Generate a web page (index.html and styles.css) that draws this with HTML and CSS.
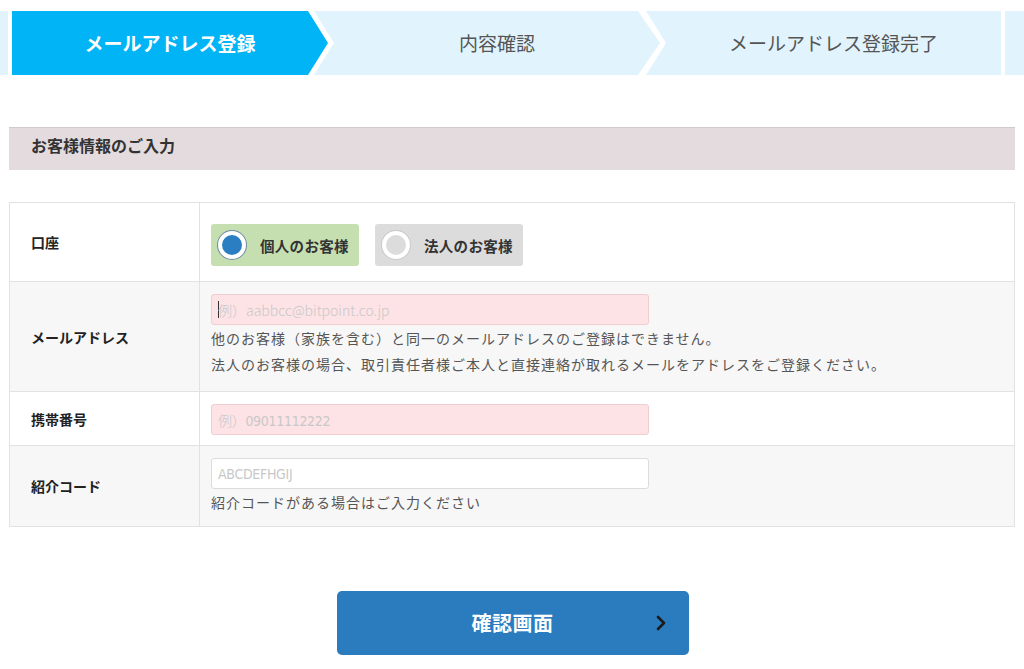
FILE: index.html
```html
<!DOCTYPE html>
<html lang="ja">
<head>
<meta charset="utf-8">
<title>メールアドレス登録</title>
<link rel="stylesheet" href="styles.css">
</head>
<body>
<div class="steps">
  <div class="step-edge"></div>
  <div class="step step-first active"><span>メールアドレス登録</span></div>
  <div class="step step-mid"><span>内容確認</span></div>
  <div class="step step-last"><span>メールアドレス登録完了</span></div>
  <div class="step-tail"></div>
</div>

<div class="content">
  <h2 class="section-title">お客様情報のご入力</h2>

  <div class="form-table">
    <div class="row">
      <div class="label">口座</div>
      <div class="value value-radio">
        <label class="radio-box selected"><span class="radio-dot"></span><span class="radio-text">個人のお客様</span></label>
        <label class="radio-box"><span class="radio-dot"></span><span class="radio-text">法人のお客様</span></label>
      </div>
    </div>
    <div class="row alt">
      <div class="label">メールアドレス</div>
      <div class="value value-mail">
        <div class="input pink"><span class="caret"></span><span class="ph">例）aabbcc@bitpoint.co.jp</span></div>
        <p class="note">他のお客様（家族を含む）と同一のメールアドレスのご登録はできません。</p>
        <p class="note">法人のお客様の場合、取引責任者様ご本人と直接連絡が取れるメールをアドレスをご登録ください。</p>
      </div>
    </div>
    <div class="row">
      <div class="label">携帯番号</div>
      <div class="value value-tight">
        <div class="input pink"><span class="ph narrow">例）09011112222</span></div>
      </div>
    </div>
    <div class="row alt">
      <div class="label">紹介コード</div>
      <div class="value value-code">
        <div class="input"><span class="ph narrow">ABCDEFHGIJ</span></div>
        <p class="note">紹介コードがある場合はご入力ください</p>
      </div>
    </div>
  </div>

  <div class="actions">
    <button class="btn-confirm" type="button">
      <span>確認画面</span>
      <svg class="btn-arrow" width="12" height="16" viewBox="0 0 12 16"><polyline points="3,2 9,8 3,14" fill="none" stroke="#1a1a1a" stroke-width="2.6" stroke-linecap="round" stroke-linejoin="round"/></svg>
    </button>
  </div>
</div>
</body>
</html>
```

FILE: styles.css
```css
* { box-sizing: border-box; }
html, body { margin: 0; padding: 0; background: #fff; }
body {
  font-family: "Noto Sans CJK JP", "Noto Sans", sans-serif;
  color: #333;
  width: 1024px;
  overflow: hidden;
}

.steps {
  display: flex;
  height: 64px;
  margin-top: 11px;
  overflow: hidden;
}
.step-edge {
  flex: 0 0 8px;
  background: #e1f3fc;
  margin-right: 4px;
}
.step {
  display: flex;
  align-items: center;
  justify-content: center;
  background: #e1f3fc;
  color: #555;
  font-size: 19px;
  flex: 0 0 auto;
  padding-bottom: 2px;
}
.step.active {
  background: #00b4f5;
  color: #fff;
  font-weight: 700;
}
.step-first {
  width: 316px;
  clip-path: polygon(0 0, calc(100% - 20px) 0, 100% 50%, calc(100% - 20px) 100%, 0 100%);
}
.step-mid {
  width: 346px;
  margin-left: -14px;
  padding-left: 20px;
  clip-path: polygon(0 0, calc(100% - 22px) 0, 100% 50%, calc(100% - 22px) 100%, 0 100%, 20px 50%);
}
.step-last {
  width: 355px;
  margin-left: -14px;
  padding-left: 20px;
  clip-path: polygon(0 0, 100% 0, 100% 100%, 0 100%, 20px 50%);
}
.step-tail {
  flex: 1 0 auto;
  margin-left: 4px;
  background: #e1f3fc;
}

.content {
  margin: 0 9px;
}
.section-title {
  margin: 52px 0 0;
  height: 43px;
  background: #e4dbde;
  border-top: 1px solid #d2c9cc;
  font-size: 16px;
  font-weight: 700;
  color: #333;
  padding-left: 22px;
  padding-bottom: 8px;
  display: flex;
  align-items: center;
}

.form-table {
  margin-top: 32px;
  border: 1px solid #e2e2e2;
  border-bottom: none;
}
.row {
  display: flex;
  border-bottom: 1px solid #e2e2e2;
  background: #fff;
}
.row.alt { background: #f7f7f7; }
.label {
  flex: 0 0 190px;
  border-right: 1px solid #e2e2e2;
  font-size: 14px;
  font-weight: 700;
  color: #222;
  padding-left: 21px;
  display: flex;
  align-items: center;
}
.value {
  flex: 1;
  padding: 12px 11px 12px;
}
.value-mail { padding: 12px 11px 14px; }
.value-tight { padding: 12px 11px 10px; }
.value-code { padding: 12px 11px 11px; }
.value-radio {
  display: flex;
  gap: 16px;
  padding: 21px 11px 15px;
}
.radio-box {
  display: flex;
  align-items: center;
  width: 148px;
  height: 42px;
  border-radius: 3px;
  background: #dcdcdc;
  padding-left: 7px;
}
.radio-box.selected { background: #c6dfb1; }
.radio-dot {
  width: 28px;
  height: 28px;
  border-radius: 50%;
  background: #dcdcdc;
  border: 4px solid #fff;
  box-shadow: 0 0 0 1px #c9c9c9;
  margin-right: 14px;
  flex: 0 0 auto;
}
.selected .radio-dot {
  background: #2b7ec1;
  box-shadow: 0 0 0 1px #6d8aa5;
}
.radio-text {
  font-size: 14.5px;
  font-weight: 700;
  color: #333;
  letter-spacing: 0.3px;
}

.input {
  width: 438px;
  height: 31px;
  border: 1px solid #dcdcdc;
  border-radius: 3px;
  background: #fff;
  display: flex;
  align-items: center;
  padding-left: 6px;
  position: relative;
}
.input.pink {
  background: #fde3e6;
  border-color: #efcdd1;
}
.caret {
  width: 1px;
  height: 17px;
  background: #333;
  margin-right: -1px;
}
.ph {
  font-family: "Noto Sans CJK JP", "Noto Sans", sans-serif;
  font-size: 14px;
  color: #c8c8c8;
  font-weight: 300;
}
.ph.narrow {
  font-family: "DejaVu Sans Condensed", "Noto Sans CJK JP", sans-serif;
  font-stretch: condensed;
  font-size: 14px;
  letter-spacing: -0.3px;
}
.note {
  margin: 0;
  font-size: 14px;
  line-height: 26px;
  color: #555;
  letter-spacing: 1px;
}

.actions {
  display: flex;
  justify-content: center;
  margin-top: 64px;
}
.btn-confirm {
  position: relative;
  width: 352px;
  height: 64px;
  margin-left: 1px;
  border: none;
  border-radius: 5px;
  background: #2b7cbf;
  color: #fff;
  font-family: "Noto Sans CJK JP", "Noto Sans", sans-serif;
  font-size: 20px;
  font-weight: 700;
  letter-spacing: 0.5px;
  display: flex;
  align-items: center;
  justify-content: center;
  padding-bottom: 2px;
}
.btn-arrow {
  position: absolute;
  right: 22px;
  top: 24px;
}
```
